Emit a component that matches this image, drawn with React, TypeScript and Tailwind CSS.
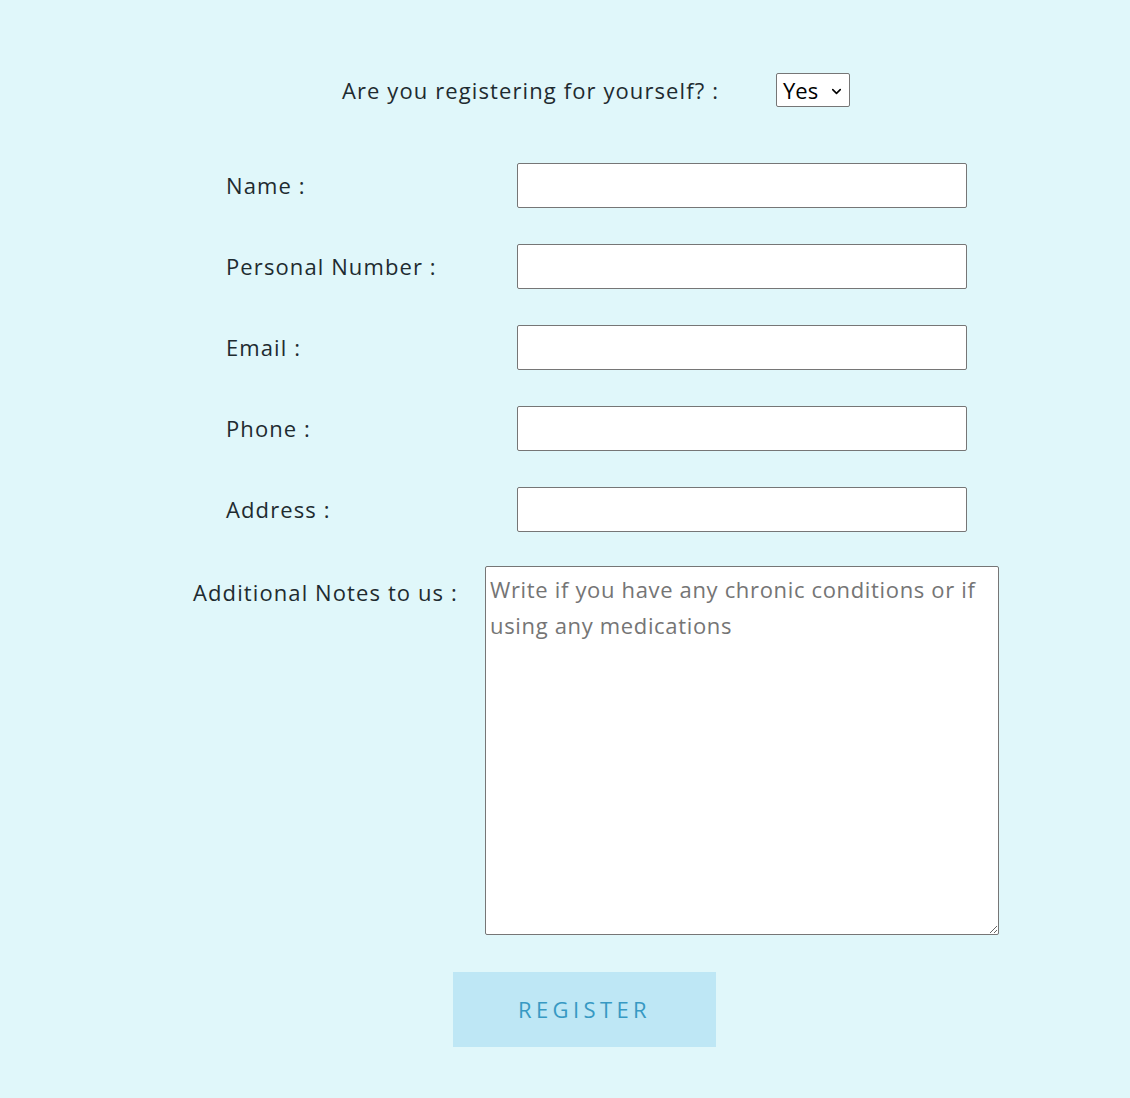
import { ChevronDown } from "lucide-react";

const fields = ["Name :", "Personal Number :", "Email :", "Phone :", "Address :"];

export default function App() {
  return (
    <div
      className="min-h-[1098px] bg-[#e0f7fa] text-[#1e2b30] text-[22px] tracking-[0.05em]"
      style={{ fontFamily: "'Open Sans', 'Noto Sans', sans-serif" }}
    >
      <div className="pl-[342px] pt-[73px] flex items-center">
        <span className="w-[434px] leading-[34px]">Are you registering for yourself? :</span>
        <div className="relative w-[74px] h-[34px] bg-white border border-[#767676] rounded-[2px] flex items-center pl-[6px] text-black text-[22px] tracking-normal">
          <span>Yes</span>
          <ChevronDown className="absolute right-[5px] top-[10px] w-[15px] h-[15px]" strokeWidth={2.5} />
        </div>
      </div>

      <div className="pl-[226px] pt-[56px] flex flex-col gap-[36px]">
        {fields.map((f) => (
          <div key={f} className="flex items-center">
            <label className="w-[291px]">{f}</label>
            <input
              type="text"
              className="w-[450px] h-[45px] bg-white border border-[#767676] rounded-[2px] outline-none"
            />
          </div>
        ))}
      </div>

      <div className="pl-[193px] pt-[34px] flex items-start">
        <label className="w-[292px] pt-[10px]">Additional Notes to us :</label>
        <textarea
          className="w-[514px] h-[369px] bg-white border border-[#767676] rounded-[2px] pl-[4px] pr-[6px] py-[4px] leading-[36px] tracking-[0.03em] placeholder:text-[#757575] outline-none resize-y"
          placeholder="Write if you have any chronic conditions or if using any medications"
        />
      </div>

      <div className="pl-[453px] pt-[37px]">
        <button className="w-[263px] h-[75px] bg-[#bee7f5] text-[#3799c3] tracking-[0.2em] text-[22px]">
          REGISTER
        </button>
      </div>
    </div>
  );
}
